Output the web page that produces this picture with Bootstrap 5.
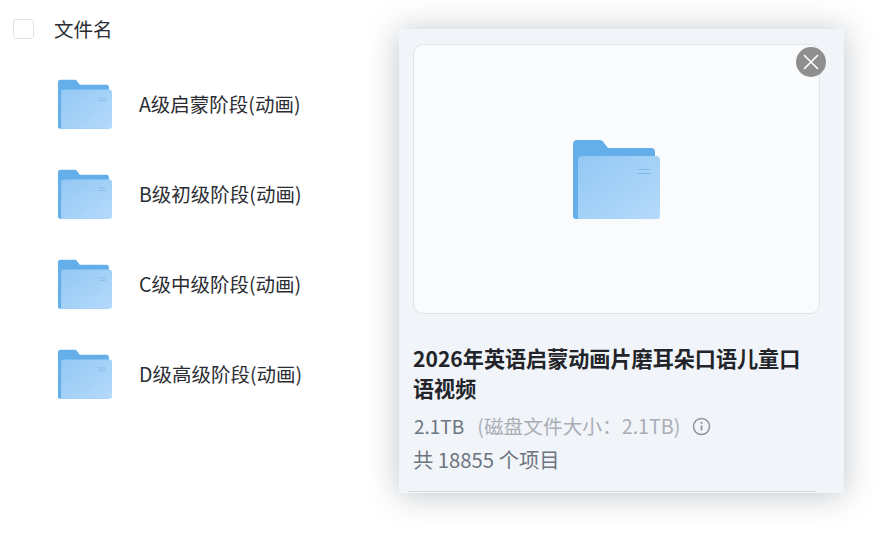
<!DOCTYPE html>
<html lang="zh-CN">
<head>
    <meta charset="UTF-8">
    <meta name="viewport" content="width=device-width, initial-scale=1.0">
    <title>文件名</title>
    <link rel="stylesheet" href="https://cdn.jsdelivr.net/npm/bootstrap@5.3.0/dist/css/bootstrap.min.css">
    <style>
        body {
            width: 880px;
            height: 542px;
            overflow: hidden;
            background: #fff;
            color: #2b2d33;
            font-family: "Noto Sans CJK SC", "Liberation Sans", sans-serif;
        }
        .file-head {
            padding: 19px 0 0 13px;
            height: 79px;
            font-size: 19.500px;
            line-height: 20px;
        }
        .head-check {
            width: 21px;
            height: 20px;
            border: 1px solid #e4e4e6;
            border-radius: 3px;
            margin-right: 20px;
        }
        .file-row {
            height: 90px;
            padding-left: 58px;
            font-size: 19.500px;
            line-height: 49px;
        }
        .file-row .folder-small {
            width: 54px;
            height: 51px;
            margin-right: 27px;
        }
        .detail-panel {
            left: 399px;
            top: 29px;
            width: 445px;
            height: 464px;
            background: #f1f4f8;
            box-shadow: 0 2px 30px rgba(60, 70, 85, .32);
            padding: 15px 24px 0 14px;
        }
        .preview-box {
            height: 270px;
            padding-top: 2px;
            background: #f9fbfd;
            border: 1px solid #dfe4ea;
            border-radius: 10px;
        }
        .folder-big { width: 87px; height: 80px; }
        .close-btn {
            right: 18px;
            top: 18px;
            width: 30px;
            height: 30px;
            background: #8f8f8f;
        }
        .panel-title {
            font-size: 21.100px;
            font-weight: 700;
            line-height: 30px;
            margin: 29px 0 0;
            color: #22242a;
        }
        .size-line {
            font-size: 19px;
            line-height: 28px;
            margin-top: 9px;
            padding-left: 1px;
            color: #6d7480;
        }
        .size-line em { font-style: normal; font-size: 19.700px; color: #a9aeb6; margin-left: 13px; }
        .size-line svg { width: 19px; height: 19px; margin-left: 12px; }
        .count-line {
            font-size: 20.300px;
            line-height: 28px;
            margin-top: 5px;
            color: #6d7480;
        }
        .panel-rule {
            left: 9px;
            right: 28px;
            bottom: 1px;
            height: 1px;
            background: #d7dbe0;
        }
    </style>
</head>
<body class="position-relative">
    <svg width="0" height="0" class="position-absolute">
        <defs>
            <linearGradient id="frontFill" x1="0" y1="0" x2="1" y2="1">
                <stop offset="0" stop-color="#93c8f4"/>
                <stop offset="1" stop-color="#b5dafb"/>
            </linearGradient>
            <symbol id="folder" viewBox="0 0 87 80">
                <path d="M0 4a4 4 0 0 1 4-4h23a4 4 0 0 1 3 1.500l5 6.500h43a4 4 0 0 1 4 4v67H3a3 3 0 0 1-3-3z" fill="#64aeea"/>
                <path d="M5 20a4 4 0 0 1 4-4h74a4 4 0 0 1 4 4v56a3 3 0 0 1-3 3H5z" fill="url(#frontFill)"/>
                <path d="M65 29.500h12M65 33.500h12" stroke="#7fb7e6" stroke-width="1.200"/>
            </symbol>
        </defs>
    </svg>

    <div class="file-head d-flex align-items-start">
        <div class="head-check bg-white"></div>
        <div>文件名</div>
    </div>
    <div class="file-row d-flex align-items-start">
        <svg class="folder-small flex-shrink-0"><use href="#folder"/></svg>
        <span>A级启蒙阶段(动画)</span>
    </div>
    <div class="file-row d-flex align-items-start">
        <svg class="folder-small flex-shrink-0"><use href="#folder"/></svg>
        <span>B级初级阶段(动画)</span>
    </div>
    <div class="file-row d-flex align-items-start">
        <svg class="folder-small flex-shrink-0"><use href="#folder"/></svg>
        <span>C级中级阶段(动画)</span>
    </div>
    <div class="file-row d-flex align-items-start">
        <svg class="folder-small flex-shrink-0"><use href="#folder"/></svg>
        <span>D级高级阶段(动画)</span>
    </div>

    <div class="detail-panel position-absolute">
        <div class="preview-box d-flex align-items-center justify-content-center">
            <svg class="folder-big"><use href="#folder"/></svg>
        </div>
        <div class="close-btn position-absolute rounded-circle d-flex align-items-center justify-content-center">
            <svg width="18" height="18" viewBox="0 0 18 18"><path d="M2 2l14 14M16 2L2 16" stroke="#fff" stroke-width="1.600" fill="none"/></svg>
        </div>
        <h2 class="panel-title">2026年英语启蒙动画片磨耳朵口语儿童口语视频</h2>
        <div class="size-line d-flex align-items-center">
            2.1TB<em>(磁盘文件大小：2.1TB)</em>
            <svg viewBox="0 0 19 19"><circle cx="9.500" cy="9.500" r="8" fill="none" stroke="#8f949c" stroke-width="1.500"/><path d="M9.500 8.500v5" stroke="#8f949c" stroke-width="1.700"/><circle cx="9.500" cy="5.800" r="1.100" fill="#8f949c"/></svg>
        </div>
        <div class="count-line">共 18855 个项目</div>
        <div class="panel-rule position-absolute"></div>
    </div>
</body>
</html>
